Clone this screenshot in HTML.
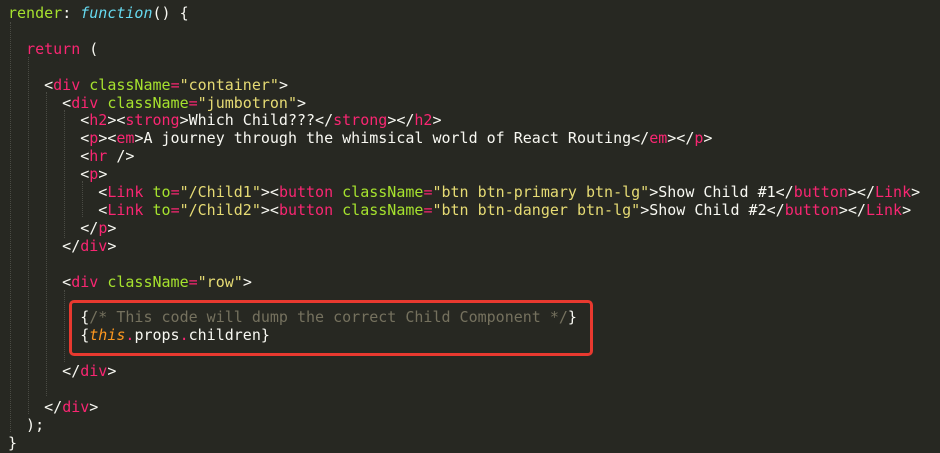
<!DOCTYPE html>
<html><head><meta charset="utf-8"><style>
html,body{margin:0;padding:0;background:#272822;width:940px;height:452px;overflow:hidden}
pre{margin:0;position:absolute;left:8px;top:5px;font-family:"DejaVu Sans Mono","Liberation Mono",monospace;font-size:15px;line-height:17.9px;color:#f8f8f2;letter-spacing:0}
.t{color:#f92672}.a{color:#a6e22e}.s{color:#e6db74}.k{color:#f92672}
.f{color:#66d9ef;font-style:italic}.c{color:#75715e}.o{color:#fd971f;font-style:italic}
.g{position:absolute;width:0;border-left:1px dotted #4a4b44}
.box{position:absolute;left:69px;top:300px;width:518px;height:50px;border:3px solid #e8392f;border-radius:5px}
</style></head><body>
<div class="g" style="left:10px;top:22px;height:410px"></div>
<div class="g" style="left:28px;top:57px;height:357px"></div>
<div class="g" style="left:46px;top:92px;height:304px"></div>
<div class="g" style="left:64px;top:110px;height:128px"></div>
<div class="g" style="left:64px;top:290px;height:72px"></div>
<div class="g" style="left:82px;top:181px;height:36px"></div>
<div class="box"></div>
<pre><span class="a">render</span>: <span class="f">function</span>() {

  <span class="k">return</span> (

    &lt;<span class="t">div</span> <span class="a">className</span><span class="t">=</span><span class="s">"container"</span>&gt;
      &lt;<span class="t">div</span> <span class="a">className</span><span class="t">=</span><span class="s">"jumbotron"</span>&gt;
        &lt;<span class="t">h2</span>&gt;&lt;<span class="t">strong</span>&gt;Which Child???&lt;/<span class="t">strong</span>&gt;&lt;/<span class="t">h2</span>&gt;
        &lt;<span class="t">p</span>&gt;&lt;<span class="t">em</span>&gt;A journey through the whimsical world of React Routing&lt;/<span class="t">em</span>&gt;&lt;/<span class="t">p</span>&gt;
        &lt;<span class="t">hr</span> /&gt;
        &lt;<span class="t">p</span>&gt;
          &lt;<span class="t">Link</span> <span class="a">to</span><span class="t">=</span><span class="s">"/Child1"</span>&gt;&lt;<span class="t">button</span> <span class="a">className</span><span class="t">=</span><span class="s">"btn btn-primary btn-lg"</span>&gt;Show Child #1&lt;/<span class="t">button</span>&gt;&lt;/<span class="t">Link</span>&gt;
          &lt;<span class="t">Link</span> <span class="a">to</span><span class="t">=</span><span class="s">"/Child2"</span>&gt;&lt;<span class="t">button</span> <span class="a">className</span><span class="t">=</span><span class="s">"btn btn-danger btn-lg"</span>&gt;Show Child #2&lt;/<span class="t">button</span>&gt;&lt;/<span class="t">Link</span>&gt;
        &lt;/<span class="t">p</span>&gt;
      &lt;/<span class="t">div</span>&gt;

      &lt;<span class="t">div</span> <span class="a">className</span><span class="t">=</span><span class="s">"row"</span>&gt;

        {<span class="c">/* This code will dump the correct Child Component */</span>}
        {<span class="o">this</span><span class="t">.</span>props<span class="t">.</span>children}

      &lt;/<span class="t">div</span>&gt;

    &lt;/<span class="t">div</span>&gt;
  );
}</pre>
</body></html>
